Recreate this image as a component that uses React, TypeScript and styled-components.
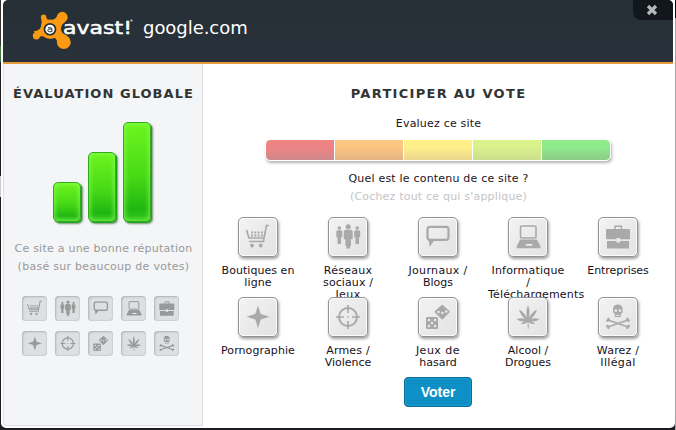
import React from "react";
import styled, { createGlobalStyle } from "styled-components";

const Global = createGlobalStyle`
  * { box-sizing: border-box; }
  body {
    margin: 0;
    background: #1d1c20;
    font-family: "DejaVu Sans", Verdana, sans-serif;
    overflow: hidden;
  }
`;

const Backdrop = styled.div`
  width: 676px;
  height: 430px;
  padding: 0 1px 2px 1px;
  background:
    linear-gradient(#0c0d10 0 18px, #a5a5a7 18px 430px) right / 1px 100% no-repeat,
    linear-gradient(#333 0 46px, #43733c 46px 62px, #1d1c20 62px 176px, #c9c9cc 176px 197px, #1d1c20 197px) left / 1px 100% no-repeat,
    #1d1c20;
`;

const Frame = styled.div`
  height: 428px;
  padding: 0 2px;
  background: #fff;
  border-radius: 0 0 5px 5px;
`;

const Panel = styled.div`
  height: 426px;
  display: flex;
  flex-direction: column;
  border-radius: 5px 5px 4px 4px;
  overflow: hidden;
`;

const Header = styled.header`
  flex: none;
  height: 64px;
  display: flex;
  align-items: flex-start;
  background: linear-gradient(#262e36, #29313a);
  border-bottom: 2px solid #e59b3c;
`;

const Logo = styled.svg`
  width: 108px;
  height: 52px;
  margin-left: 27px;
`;

const Domain = styled.h1`
  flex: 1;
  margin: 16px 0 0 5px;
  font-size: 18px;
  font-weight: 400;
  line-height: 24px;
  letter-spacing: -0.05px;
  color: #fff;
`;

const CloseButton = styled.button`
  width: 40px;
  height: 20px;
  padding: 0 2px 0 0;
  display: flex;
  align-items: center;
  justify-content: center;
  border: 0;
  border-radius: 0 0 0 8px;
  background: #11171c;
`;

const Body = styled.div`
  flex: 1;
  display: flex;
  background: #fff;
`;

const Sidebar = styled.aside`
  width: 200px;
  display: flex;
  flex-direction: column;
  align-items: center;
  border: solid #dcdee0;
  border-width: 0 1px 1px 1px;
  border-radius: 0 0 0 4px;
  background: #f3f5f7;
`;

const Main = styled.main`
  flex: 1;
  display: flex;
  flex-direction: column;
  align-items: center;
`;

const Title = styled.h2<{ $track: number }>`
  margin: 21px 0 0;
  padding-left: 1px;
  font-size: 13px;
  line-height: 18px;
  letter-spacing: ${(p) => p.$track}px;
  white-space: nowrap;
  color: #333;
`;

const Bars = styled.div`
  height: 100px;
  margin: 19px 2px 0 0;
  display: flex;
  align-items: flex-end;
  gap: 7px;
`;

const Bar = styled.div<{ $height: number }>`
  width: 28px;
  height: ${(p) => p.$height}px;
  border: 1px solid #2faa1c;
  border-radius: 5px;
  background: linear-gradient(#6df51f, #47d916 55%, #20b612 88%, #35c81f);
  box-shadow:
    inset 0 0 5px 1px rgba(140, 255, 90, 0.75),
    1px 1px 0 #1ea51b,
    2px 2px 2px rgba(40, 80, 40, 0.6);
`;

const Note = styled.p`
  margin: 18px 0 0;
  padding-left: 1px;
  font-size: 11px;
  line-height: 18px;
  text-align: center;
  white-space: nowrap;
  color: #999;
`;

const Text = styled.span<{ $track: number }>`
  display: block;
  letter-spacing: ${(p) => p.$track}px;
`;

const Badges = styled.div`
  margin: 20px 5px 0 0;
  display: grid;
  grid-template-columns: repeat(5, 25px);
  gap: 10px 8px;
`;

const Badge = styled.div`
  height: 25px;
  display: flex;
  border-radius: 4px;
  background: #dedfe0;
  box-shadow: inset 1px 1px 2px #b0b1b3, inset -1px -1px 1px #d0d1d3;
  color: #98999a;
`;

const Prompt = styled.p<{ $top: number; $muted?: boolean }>`
  margin: ${(p) => p.$top}px 0 0;
  padding-left: 1px;
  font-size: 11px;
  line-height: 18px;
  letter-spacing: 0.2px;
  color: ${(p) => (p.$muted ? "#c4c4c4" : "#1b1420")};
`;

const Rating = styled.div`
  width: 346px;
  height: 22px;
  margin: 6px 0 0;
  display: grid;
  grid-template-columns: repeat(5, 1fr);
  gap: 1px;
  border: 1px solid #fff;
  border-radius: 5px;
  background: #fff;
  box-shadow: 1px 2px 3px rgba(0, 0, 0, 0.3);
  overflow: hidden;
`;

const Grade = styled.div<{ $from: string; $to: string }>`
  background: linear-gradient(${(p) => p.$from} 35%, ${(p) => p.$to});
  &:first-child { border-radius: 4px 0 0 4px; }
  &:last-child { border-radius: 0 4px 4px 0; }
`;

const Categories = styled.div`
  height: 160px;
  margin: 11px 0 0;
  display: grid;
  grid-template-columns: repeat(5, 80px);
  grid-auto-rows: 80px;
  column-gap: 10px;
`;

const Category = styled.div`
  display: flex;
  flex-direction: column;
  align-items: center;
`;

const Toggle = styled.button`
  flex: none;
  width: 40px;
  height: 40px;
  padding: 0;
  display: flex;
  border: 1px solid #939393;
  border-radius: 5px;
  background: linear-gradient(135deg, #f3f3f3, #e2e2e2);
  box-shadow: inset 0 0 0 1px #fbfbfb, 1px 2px 3px rgba(0, 0, 0, 0.38);
  color: #a9a9a9;
`;

const Caption = styled.div`
  width: 80px;
  margin-top: 8px;
  font-size: 11px;
  line-height: 12px;
  text-align: center;
  white-space: nowrap;
  color: #17101c;
`;

const Vote = styled.button`
  width: 68px;
  height: 30px;
  padding: 0;
  border: 1px solid #0a6c97;
  border-radius: 4px;
  background: #0e90c6;
  box-shadow: inset 0 0 0 1px #1c9bd0;
  font: bold 14px "Liberation Sans", Arial, sans-serif;
  color: #fff;
`;

const Drawing = styled.svg`
  display: block;
  width: 100%;
  height: 100%;
`;

const art: Record<string, React.ReactNode> = {
  cart: (
    <>
      <path d="M31 8.500h-2.500l-2.500 12.500H11L8.500 13M11 24.500h14.500L26 21" fill="none" stroke="currentColor" strokeWidth="1.700" />
      <path d="M13 15.500h12M13 18.500h12" stroke="currentColor" strokeWidth="2" strokeDasharray="2 1.300" />
      <circle cx="14" cy="28.500" r="1.900" />
      <circle cx="22.700" cy="28.500" r="1.900" />
    </>
  ),
  people: (
    <>
      <circle cx="11.300" cy="11" r="1.800" />
      <path d="M9.300 13.300h4l1 1v6h-1.200v6.700h-3.600v-6.700H8.300v-6z" />
      <circle cx="29.200" cy="11" r="1.800" />
      <path d="M27.200 13.300h4l1 1v6H31v6.700h-3.600v-6.700h-1.200v-6z" />
      <circle cx="20.200" cy="9.800" r="2.500" />
      <path d="M17.200 12.800h6l1.500 1.500v8H23v6.700h-1v2.500h-3.600V29h-1v-6.700h-1.700v-8z" />
    </>
  ),
  bubble: (
    <>
      <rect x="9.500" y="9.800" width="21" height="13" rx="2.500" fill="none" stroke="currentColor" strokeWidth="2.200" />
      <path d="M10.500 22.500l1.200 7.500 5-7.300z" />
    </>
  ),
  laptop: (
    <>
      <rect x="12.500" y="9" width="15.500" height="12" rx="1.300" fill="none" stroke="currentColor" strokeWidth="1.600" />
      <path d="M12 22.500h17l3.500 7v1.700H8.700v-1.700z" />
      <path d="M18 27h6l.6 1.800h-7.300z" fill="#eee" />
    </>
  ),
  briefcase: (
    <>
      <path d="M17 12.500V9.300h6.400v3.200" fill="none" stroke="currentColor" strokeWidth="1.500" />
      <path d="M9 12h22a1 1 0 011 1v9.300H22V21h-3.600v1.300H8V13a1 1 0 011-1zM9 24h9.400v1.500H22V24h9v7.500H9z" />
    </>
  ),
  star: <path d="M20 8.500l2.700 8.500L31.500 19.700l-8.800 2.700L20 31.200l-2.700-8.800L8.500 19.700l8.800-2.700z" />,
  target: (
    <g fill="none" stroke="currentColor">
      <circle cx="20" cy="20" r="9" strokeWidth="2" />
      <path d="M20 8v8M20 24v8M8 20h8M24 20h8M19.300 20h1.400" strokeWidth="1.600" />
    </g>
  ),
  dice: (
    <>
      <rect x="8" y="20" width="12" height="12" rx="1.200" />
      <path d="M24.300 8.500l6.700 6.300-6.700 7-7.100-7z" stroke="currentColor" strokeLinejoin="round" strokeWidth="1.500" />
      <g fill="#ededed">
        <circle cx="11" cy="23" r="1.200" /><circle cx="17" cy="23" r="1.200" /><circle cx="14" cy="26" r="1.200" />
        <circle cx="11" cy="29" r="1.200" /><circle cx="17" cy="29" r="1.200" />
        <circle cx="20.500" cy="15" r="1.200" /><circle cx="24.500" cy="16" r="1.200" /><circle cx="28.300" cy="14.500" r="1.200" />
      </g>
    </>
  ),
  leaf: (
    <path d="M20 8c1.800 4.500 2 8.500 1.100 13 1.900-4 4.200-6.500 7.900-8.500-1.200 4.200-3.300 7-6.300 9.700 3-1.100 5.800-1.200 8.800.3-3 1.800-6 2.300-9 1.700 2 .4 3.500 1.300 4.500 2.800-2.600.3-4.600-.4-6.500-2l.3 6.500h-1l-.3-6.500c-2 1.600-4 2.300-6.500 2 1-1.500 2.500-2.400 4.500-2.800-3 .6-6 .1-9-1.700 3-1.500 5.800-1.400 8.800-.3-3-2.700-5.100-5.500-6.300-9.700 3.700 2 6 4.500 7.900 8.500-.9-4.500-.7-8.500 1.100-13z" />
  ),
  skull: (
    <>
      <path d="M15 12c0-3 2-4.500 4.800-4.500s4.800 1.500 4.800 4.500v3.200l-1.500 1.300-.4 3.500h-5.800l-.4-3.500L15 15.200z" />
      <path d="M16.500 12.300h2.400v2.400h-2.400zM20.700 12.300h2.400v2.400h-2.400zM17.800 17.700h4v1.100h-4z" fill="#e9e9e9" />
      <path d="M10 23l20 7M30 23L10 30" stroke="currentColor" strokeWidth="1.800" />
      <circle cx="9.500" cy="23.600" r="1.400" /><circle cx="10.600" cy="22" r="1.300" />
      <circle cx="30.500" cy="23.600" r="1.400" /><circle cx="29.400" cy="22" r="1.300" />
      <circle cx="9.500" cy="29.200" r="1.400" /><circle cx="10.600" cy="30.800" r="1.300" />
      <circle cx="30.500" cy="29.200" r="1.400" /><circle cx="29.400" cy="30.800" r="1.300" />
    </>
  ),
};

const Icon = ({ name, box }: { name: string; box: string }) => (
  <Drawing viewBox={box} fill="currentColor" aria-hidden="true">
    {art[name]}
  </Drawing>
);

const categories: { icon: string; lines: [string, number][] }[] = [
  { icon: "cart", lines: [["Boutiques en", 0.05], ["ligne", 0.1]] },
  { icon: "people", lines: [["Réseaux", 0.25], ["sociaux /", 0.1], ["Jeux", 0.4]] },
  { icon: "bubble", lines: [["Journaux /", 0.35], ["Blogs", 0]] },
  { icon: "laptop", lines: [["Informatique", 0.2], ["/", 0], ["Téléchargements", 0.17]] },
  { icon: "briefcase", lines: [["Entreprises", -0.05]] },
  { icon: "star", lines: [["Pornographie", 0.07]] },
  { icon: "target", lines: [["Armes /", 0.2], ["Violence", -0.05]] },
  { icon: "dice", lines: [["Jeux de", 0.5], ["hasard", 0]] },
  { icon: "leaf", lines: [["Alcool /", 0], ["Drogues", 0]] },
  { icon: "skull", lines: [["Warez /", 0.2], ["Illégal", 0.35]] },
];

const grades = [
  ["#ee8384", "#d0888a"],
  ["#fbc681", "#e4b284"],
  ["#fff08a", "#ecd690"],
  ["#daf28c", "#cade8c"],
  ["#8fec8b", "#8ccb87"],
];

const AvastLogo = () => (
  <Logo viewBox="30 0 108 52" role="img" aria-label="avast!">
    <g fill="#f99a12">
      <circle cx="62.300" cy="17.200" r="5.400" />
      <circle cx="63.800" cy="42.200" r="6.900" />
      <circle cx="36.400" cy="35.800" r="3.600" />
      <circle cx="43.600" cy="17.300" r="2.700" />
      <circle cx="50.300" cy="29.300" r="9.800" />
      <path d="M41.500 18.500l4.300-2.200q.5 3.700 4.200 3.700 6 0 7.500-5l7.500 7q-4 2.500-4 7t6 6.500l-9.800 8q.3-6.500-7.200-7.500-6-.5-12.500 1l-3.800-5.700q6.300-.5 7.300-4.800 1.300-4.500 0-9z" />
    </g>
    <circle cx="50" cy="29.300" r="6.300" fill="#272f37" />
    <circle cx="50" cy="29.300" r="4.600" fill="#fff" />
    <path d="M48 27.700h2.600q1.300 0 1.300 1.300v2.700h-2.600q-1.500 0-1.500-1.300t1.500-1.300h2.400" fill="none" stroke="#272f37" strokeWidth="1" />
    <text x="63" y="34" fill="#fff" stroke="#fff" strokeWidth="0.500" fontFamily="DejaVu Sans" fontSize="18" textLength="69" lengthAdjust="spacingAndGlyphs">
      avast!
    </text>
    <circle cx="131.500" cy="20.500" r="1.100" fill="#cfd2d4" />
  </Logo>
);

export default function App() {
  return (
    <>
      <Global />
      <Backdrop>
        <Frame>
          <Panel>
            <Header>
              <AvastLogo />
              <Domain>google.com</Domain>
              <CloseButton aria-label="Fermer">
                <svg width="12" height="12" viewBox="0 0 12 12">
                  <path d="M2 2l8 8M10 2l-8 8" stroke="#b4b8ba" strokeWidth="3.200" />
                </svg>
              </CloseButton>
            </Header>
            <Body>
              <Sidebar>
                <Title $track={1.05}>ÉVALUATION GLOBALE</Title>
                <Bars>
                  <Bar $height={40} />
                  <Bar $height={70} />
                  <Bar $height={100} />
                </Bars>
                <Note>
                  <Text $track={0.24}>Ce site a une bonne réputation</Text>
                  <Text $track={0.28}>(basé sur beaucoup de votes)</Text>
                </Note>
                <Badges>
                  {categories.map((c) => (
                    <Badge key={c.icon}>
                      <Icon name={c.icon} box="-0.500 0 40 40" />
                    </Badge>
                  ))}
                </Badges>
              </Sidebar>
              <Main>
                <Title $track={1.3}>PARTICIPER AU VOTE</Title>
                <Prompt $top={12}>Evaluez ce site</Prompt>
                <Rating>
                  {grades.map(([from, to]) => (
                    <Grade key={from} $from={from} $to={to} />
                  ))}
                </Rating>
                <Prompt $top={9}>Quel est le contenu de ce site ?</Prompt>
                <Prompt $top={0} $muted>
                  (Cochez tout ce qui s'applique)
                </Prompt>
                <Categories>
                  {categories.map((c) => (
                    <Category key={c.icon}>
                      <Toggle aria-label={c.lines.map(([t]) => t).join(" ")}>
                        <Icon name={c.icon} box="1 1 38 38" />
                      </Toggle>
                      <Caption>
                        {c.lines.map(([text, track]) => (
                          <Text key={text} $track={track}>{text}</Text>
                        ))}
                      </Caption>
                    </Category>
                  ))}
                </Categories>
                <Vote>Voter</Vote>
              </Main>
            </Body>
          </Panel>
        </Frame>
      </Backdrop>
    </>
  );
}
